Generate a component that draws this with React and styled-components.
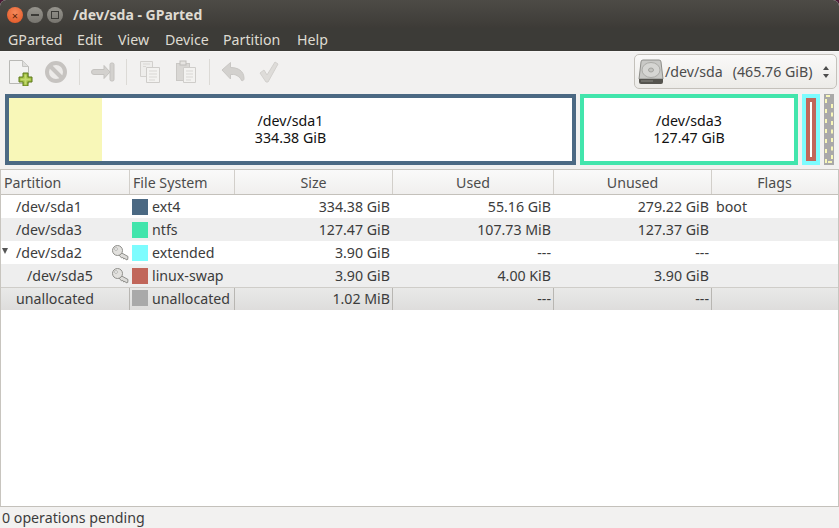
import React from 'react';
import styled, { createGlobalStyle } from 'styled-components';

const GlobalStyle = createGlobalStyle`
	html, body {
		margin: 0;
		padding: 0;
		height: 100%;
		background: #4a1a35;
	}
	#root {
		height: 100%;
	}
	* {
		box-sizing: border-box;
	}
`;

// Window
const Window = styled.div`
	display: flex;
	flex-direction: column;
	height: 528px;
	width: 839px;
	overflow: hidden;
	border-radius: 6px 6px 0 0;
	background: #f2f1f0;
	font-family: "Noto Sans", "Open Sans", sans-serif;
	font-size: 14.2px;
	color: #3c3c3c;
`;

// Title bar and menu
const TitleBar = styled.div`
	display: flex;
	align-items: center;
	height: 28px;
	flex: none;
	padding: 2px 0 0 7px;
	background: linear-gradient(#4d4b46, #3d3b37);
`;

const WindowButton = styled.span`
	display: flex;
	align-items: center;
	justify-content: center;
	width: 16px;
	height: 16px;
	margin-right: 4px;
	border-radius: 50%;
	font-size: 11px;
	line-height: 1;
	color: #5c2208;
	background: ${(p) =>
		p.$close
			? 'radial-gradient(circle at 50% 35%, #f58a5c, #e0511f)'
			: 'linear-gradient(#96948d, #77756f)'};
`;

const MinusMark = styled.span`
	width: 8px;
	height: 2px;
	background: #3c3b37;
`;

const SquareMark = styled.span`
	width: 8px;
	height: 8px;
	border: 1px solid #3c3b37;
`;

const Title = styled.span`
	margin-left: 6px;
	padding-bottom: 2px;
	font-weight: 700;
	font-size: 14px;
	color: #dfdbd2;
`;

const MenuBar = styled.nav`
	display: flex;
	align-items: center;
	height: 23px;
	flex: none;
	padding-bottom: 1px;
	background: #3c3b37;
`;

const MenuItem = styled.span`
	width: ${(p) => p.$w}px;
	padding-left: 8px;
	color: #dfdbd2;
	white-space: nowrap;
`;

// Toolbar
const Toolbar = styled.div`
	display: flex;
	align-items: center;
	height: 40px;
	flex: none;
	padding: 0 2px;
	border-top: 1px solid #f7f6f5;
`;

const ToolButton = styled.div`
	display: flex;
	align-items: center;
	justify-content: center;
	width: 36px;
	height: 32px;
`;

const ToolSeparator = styled.div`
	width: 1px;
	height: 26px;
	margin: 0 5px;
	background: #dcdad6;
`;

const DeviceSelect = styled.div`
	display: flex;
	align-items: center;
	width: 203px;
	height: 35px;
	margin-left: auto;
	padding: 0 0 0 3px;
	border: 1px solid #c4c1bb;
	border-radius: 5px;
	background: linear-gradient(#faf9f8, #ecebe8);
	color: #4c4c4c;
	white-space: nowrap;
`;

const DeviceName = styled.span`
	margin-left: 1px;
`;

const DeviceSize = styled.span`
	margin-left: 10px;
`;

const Spinner = styled.svg`
	margin-left: auto;
	margin-right: 6px;
`;

// Disk map
const DiskMap = styled.div`
	display: flex;
	gap: 4px;
	height: 71px;
	flex: none;
	margin-top: 3px;
	padding: 0 5px;
`;

const MapPartition = styled.div`
	display: flex;
	position: relative;
	align-items: center;
	justify-content: center;
	width: ${(p) => p.$w}px;
	border: 4px solid ${(p) => p.$color};
	background: ${(p) => p.$fill || '#fff'};
	color: #111;
	line-height: 17px;
	text-align: center;
`;

const UsedArea = styled.div`
	position: absolute;
	left: 0;
	top: 0;
	bottom: 0;
	width: ${(p) => p.$w}px;
	background: #f8f7b8;
`;

const MapLabel = styled.div`
	position: relative;
	padding-bottom: 1px;
`;

const SwapBar = styled.div`
	width: 10px;
	height: 100%;
	flex: none;
	padding: 4px;
	background: #c1665a;
`;

const SwapInner = styled.div`
	width: 2px;
	height: 100%;
	background: #fff;
`;

const UnallocatedBar = styled.div`
	width: 10px;
	height: 100%;
	background: #a9a9a9;
`;

// Table
const TableFrame = styled.div`
	flex: 1;
	margin-top: 4px;
	border: 1px solid #c8c5bf;
	border-bottom: 0;
	background: #fff;
`;

const Row = styled.div`
	display: grid;
	grid-template-columns: 129px 105px 158px 161px 158px 1fr;
	height: 23px;
	background: ${(p) => (p.$alt ? '#eeeeee' : '#fff')};
`;

const HeaderRow = styled(Row)`
	height: 25px;
	background: linear-gradient(#fafafa, #f0efee);
	border-bottom: 1px solid #c4c1bb;
`;

const LastRow = styled(Row)`
	background: linear-gradient(#e9e9e8, #dedddc);
	border-top: 1px solid #cfcdc9;
`;

const HeaderCell = styled.div`
	display: flex;
	align-items: center;
	justify-content: ${(p) => (p.$left ? 'flex-start' : 'center')};
	padding-left: ${(p) => (p.$left ? 3 : 0)}px;
	border-right: 1px solid ${(p) => (p.$end ? 'transparent' : '#d2cfca')};
	color: #4c4c4c;
	white-space: nowrap;
`;

const Cell = styled.div`
	display: flex;
	align-items: center;
	justify-content: ${(p) => (p.$right ? 'flex-end' : 'flex-start')};
	padding: 0 ${(p) => (p.$right ? 2 : 0)}px ${(p) => (p.$line ? 2 : 0)}px ${(p) => p.$pad || 0}px;
	border-right: 1px solid ${(p) => (p.$line ? '#b8b6b2' : 'transparent')};
	white-space: nowrap;
`;

const PartitionName = styled.span`
	flex: 1;
`;

const Triangle = styled.span`
	position: absolute;
	margin-left: -14px;
	margin-top: -3px;
	width: 0;
	height: 0;
	border-left: 3.5px solid transparent;
	border-right: 3.5px solid transparent;
	border-top: 6px solid #555;
`;

const Swatch = styled.span`
	width: 16px;
	height: 16px;
	margin: 0 4px 0 2px;
	flex: none;
	background: ${(p) => p.$color};
`;

const KeySlot = styled.svg`
	flex: none;
`;

// Status bar
const StatusBar = styled.div`
	display: flex;
	align-items: center;
	height: 22px;
	flex: none;
	padding: 0 2px;
	border-top: 1px solid #c4c1bb;
	color: #3c3c3c;
`;

function NewIcon() {
	return (
		<svg width="26" height="28" viewBox="0 0 26 28">
			<path d="M2.5 2.5h13l6 6v17h-19z" fill="#f3f3f2" stroke="#b9b9b6" />
			<path d="M15.5 2.5v6h6" fill="#dededc" stroke="#c4c4c1" />
			<path d="M16 15h5v4h4v5h-4v4h-5v-4h-4v-5h4z" fill="#9dbb3e" stroke="#5f7a1c" />
			<path d="M17.5 16.5h2v4h4v2h-4v4h-2v-4h-4v-2h4z" fill="#c4db6e" />
		</svg>
	);
}

function StopIcon() {
	return (
		<svg width="24" height="24" viewBox="0 0 24 24">
			<circle cx="12" cy="12" r="9" fill="#eceae8" stroke="#c6c3c0" strokeWidth="4" />
			<path d="M6 6l12 12" stroke="#c6c3c0" strokeWidth="4" />
		</svg>
	);
}

function ApplyArrowIcon() {
	return (
		<svg width="26" height="24" viewBox="0 0 26 24">
			<path d="M4 9.500h10V5.500l6 6.500-6 6.500v-4H4a2.500 2.500 0 0 1 0-5z" fill="#d3d1ce" stroke="#c4c2bf" strokeLinejoin="round" />
			<rect x="20" y="3" width="4" height="18" rx="1.500" fill="#d3d1ce" stroke="#c4c2bf" />
		</svg>
	);
}

function CopyIcon() {
	return (
		<svg width="22" height="24" viewBox="0 0 22 24">
			<path d="M1.500 1.500h12v15h-12z" fill="#eeedeb" stroke="#d2d0cd" />
			<path d="M7.500 7.500h13v15h-13z" fill="#f3f2f0" stroke="#cfcdca" />
			<path d="M10 11h8M10 14h8M10 17h8M10 20h6M4 4h7M4 6.500h3" stroke="#d9d7d4" />
		</svg>
	);
}

function PasteIcon() {
	return (
		<svg width="22" height="24" viewBox="0 0 22 24">
			<rect x="1.500" y="3.500" width="13" height="17" fill="#d9d7d4" stroke="#cac8c5" />
			<rect x="5" y="1" width="6" height="4" fill="#e6e4e1" stroke="#bfbdba" />
			<path d="M8.500 7.500h12v15h-12z" fill="#f3f2f0" stroke="#cfcdca" />
			<path d="M11 11h7M11 14h7M11 17h7M11 20h5" stroke="#d9d7d4" />
		</svg>
	);
}

function UndoIcon() {
	return (
		<svg width="24" height="22" viewBox="0 0 24 22">
			<path d="M1 9l8.500-7.500v5c7 0 13.500 3 13.500 11 0 1.500-1 2.500-2.500 2-1-3-5-6-8-6H9.500V18z" fill="#d3d1ce" stroke="#c9c7c4" strokeLinejoin="round" />
		</svg>
	);
}

function CheckIcon() {
	return (
		<svg width="20" height="24" viewBox="0 0 20 24">
			<path d="M1 13l4-3 3 5 8-13 3 2-10 18h-2z" fill="#dedcd9" stroke="#d2d0cd" strokeLinejoin="round" />
		</svg>
	);
}

function DiskIcon() {
	return (
		<svg width="26" height="26" viewBox="0 0 26 26">
			<path d="M5 1h16a2 2 0 0 1 2 2l2 17H1L3 3a2 2 0 0 1 2-2z" fill="#c9c9c6" stroke="#8e8e8a" />
			<ellipse cx="13" cy="11" rx="9" ry="7.500" fill="#d6d6d3" stroke="#ababa7" />
			<ellipse cx="13" cy="11" rx="2.500" ry="2" fill="#c4c4c0" stroke="#a2a29e" />
			<path d="M1 20h24v3a2 2 0 0 1-2 2H3a2 2 0 0 1-2-2z" fill="#55544f" />
			<path d="M3 22h12" stroke="#8a8984" />
		</svg>
	);
}

function KeyIcon() {
	return (
		<KeySlot width="17" height="16" viewBox="0 0 17 16">
			<path d="M8 7l8 4.500-.3 3-1.700.3-1-1.500-1.300.7-.9-1.600-1.300.5L7 10z" fill="#dcdbd8" stroke="#8f8f8b" strokeLinejoin="round" />
			<circle cx="5.500" cy="5.500" r="5" fill="#e2e1de" stroke="#8f8f8b" />
			<circle cx="4" cy="4" r="1.400" fill="#fff" stroke="#9f9f9b" strokeWidth=".7" />
		</KeySlot>
	);
}

function UnallocatedDashes() {
	const marks = [];
	for (let i = 0; i < 7; i++) {
		marks.push(<rect key={'a' + i} x="1" y={5 + i * 10} width="2" height="4" />);
		marks.push(<rect key={'b' + i} x="7" y={10 + i * 8.500} width="2" height="4" />);
	}
	return (
		<svg width="10" height="71" viewBox="0 0 10 71" fill="#f8f7b8">
			<rect x="2" y="1" width="4" height="2" />
			{marks}
			<rect x="4" y="67" width="4" height="2" />
		</svg>
	);
}

const rows = [
	{ name: '/dev/sda1', pad: 15, fs: 'ext4', color: '#4b6983', size: '334.38 GiB', used: '55.16 GiB', unused: '279.22 GiB', flags: 'boot' },
	{ name: '/dev/sda3', pad: 15, fs: 'ntfs', color: '#42e5ac', size: '127.47 GiB', used: '107.73 MiB', unused: '127.37 GiB', alt: true },
	{ name: '/dev/sda2', pad: 15, fs: 'extended', color: '#7dfcfe', size: '3.90 GiB', used: '---', unused: '---', busy: true, open: true },
	{ name: '/dev/sda5', pad: 26, fs: 'linux-swap', color: '#c1665a', size: '3.90 GiB', used: '4.00 KiB', unused: '3.90 GiB', busy: true, alt: true },
];

export default function App() {
	return (
		<>
			<GlobalStyle />
			<Window>
				<TitleBar>
					<WindowButton $close>×</WindowButton>
					<WindowButton><MinusMark /></WindowButton>
					<WindowButton><SquareMark /></WindowButton>
					<Title>/dev/sda - GParted</Title>
				</TitleBar>
				<MenuBar>
					<MenuItem $w={69}>GParted</MenuItem>
					<MenuItem $w={41}>Edit</MenuItem>
					<MenuItem $w={47}>View</MenuItem>
					<MenuItem $w={58}>Device</MenuItem>
					<MenuItem $w={74}>Partition</MenuItem>
					<MenuItem $w={50}>Help</MenuItem>
				</MenuBar>
				<Toolbar>
					<ToolButton><NewIcon /></ToolButton>
					<ToolButton><StopIcon /></ToolButton>
					<ToolSeparator />
					<ToolButton><ApplyArrowIcon /></ToolButton>
					<ToolSeparator />
					<ToolButton><CopyIcon /></ToolButton>
					<ToolButton><PasteIcon /></ToolButton>
					<ToolSeparator />
					<ToolButton><UndoIcon /></ToolButton>
					<ToolButton><CheckIcon /></ToolButton>
					<DeviceSelect>
						<DiskIcon />
						<DeviceName>/dev/sda</DeviceName>
						<DeviceSize>(465.76 GiB)</DeviceSize>
						<Spinner width="8" height="14" viewBox="0 0 8 14" fill="#4c4c4c">
							<path d="M4 1l3 4H1zM4 13l3-4H1z" />
						</Spinner>
					</DeviceSelect>
				</Toolbar>
				<DiskMap>
					<MapPartition $w={571} $color="#4b6983">
						<UsedArea $w={93} />
						<MapLabel>/dev/sda1<br />334.38 GiB</MapLabel>
					</MapPartition>
					<MapPartition $w={218} $color="#42e5ac">
						<MapLabel>/dev/sda3<br />127.47 GiB</MapLabel>
					</MapPartition>
					<MapPartition $w={18} $color="#7dfcfe" $fill="#7dfcfe">
						<SwapBar><SwapInner /></SwapBar>
					</MapPartition>
					<UnallocatedBar><UnallocatedDashes /></UnallocatedBar>
				</DiskMap>
				<TableFrame>
					<HeaderRow>
						<HeaderCell $left>Partition</HeaderCell>
						<HeaderCell $left>File System</HeaderCell>
						<HeaderCell>Size</HeaderCell>
						<HeaderCell>Used</HeaderCell>
						<HeaderCell>Unused</HeaderCell>
						<HeaderCell $end>Flags</HeaderCell>
					</HeaderRow>
					{rows.map((r) => (
						<Row key={r.name} $alt={r.alt}>
							<Cell $pad={r.pad}>
								{r.open && <Triangle />}
								<PartitionName>{r.name}</PartitionName>
								{r.busy && <KeyIcon />}
							</Cell>
							<Cell><Swatch $color={r.color} />{r.fs}</Cell>
							<Cell $right>{r.size}</Cell>
							<Cell $right>{r.used}</Cell>
							<Cell $right>{r.unused}</Cell>
							<Cell $pad={4}>{r.flags}</Cell>
						</Row>
					))}
					<LastRow>
						<Cell $pad={15} $line>unallocated</Cell>
						<Cell $line><Swatch $color="#a9a9a9" />unallocated</Cell>
						<Cell $right $line>1.02 MiB</Cell>
						<Cell $right $line>---</Cell>
						<Cell $right $line>---</Cell>
						<Cell />
					</LastRow>
				</TableFrame>
				<StatusBar>0 operations pending</StatusBar>
			</Window>
		</>
	);
}
